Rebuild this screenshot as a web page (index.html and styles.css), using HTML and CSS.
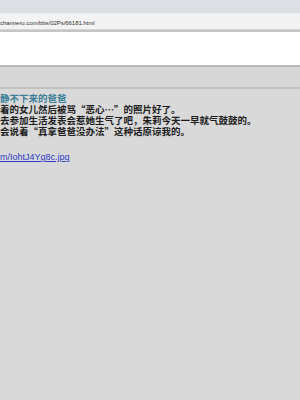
FILE: index.html
```html
<!DOCTYPE html>
<html lang="zh">
<head>
    <meta charset="UTF-8">
    <title>爸爸</title>
    <link rel="stylesheet" href="styles.css">
</head>
<body>
    <div class="tabs"></div>
    <div class="address">
        <span class="url">channeru.com/bbs/02Ps/66181.html</span>
    </div>
    <div class="blank"></div>
    <div class="strip"></div>
    <div class="post">
        <div class="post-title">静不下来的爸爸</div>
        <div class="post-body">
            <p>着的女儿然后被骂“恶心…”的照片好了。</p>
            <p>去参加生活发表会惹她生气了吧，朱莉今天一早就气鼓鼓的。</p>
            <p>会说着“真拿爸爸没办法”这种话原谅我的。</p>
        </div>
        <a class="post-link" href="#">m/IohtJ4Yg8c.jpg</a>
    </div>
</body>
</html>
```

FILE: styles.css
```css
body {
    margin: 0;
    padding: 0;
    width: 300px;
    height: 400px;
    overflow: hidden;
    background-color: #d9d9d9;
    font-family: "Noto Sans CJK SC", "Liberation Sans", sans-serif;
}
.tabs {
    height: 13px;
    background-color: #dcdfe3;
    border-bottom: 2px solid #eef0f2;
}
.address {
    height: 15px;
    background-color: #f2f3f2;
    border-bottom: 1px solid #d4d6d4;
    box-shadow: 0 2px 0 #c4c6c4;
    display: flex;
    align-items: center;
    padding-top: 1px;
    box-sizing: border-box;
}
.url {
    font-family: "Liberation Sans", sans-serif;
    font-size: 6px;
    color: #333;
    letter-spacing: -0.05px;
}
.blank {
    height: 33px;
    margin-top: 2px;
    background-color: #ffffff;
}
.strip {
    height: 20px;
    background-color: #d6d6d6;
    border-top: 2px solid #b8b8b8;
    border-bottom: 2px solid #c2c2c2;
}
.post {
    padding-top: 4px;
}
.post-title {
    font-size: 9.5px;
    line-height: 11px;
    color: #3a7e98;
    font-weight: bold;
}
.post-body p {
    margin: 0;
    font-size: 9.5px;
    line-height: 11px;
    color: #1c1c1c;
    font-weight: bold;
}
.post-link {
    display: inline-block;
    margin-top: 15px;
    font-family: "Liberation Sans", sans-serif;
    font-size: 9px;
    line-height: 11px;
    color: #2a3cc6;
}
```
